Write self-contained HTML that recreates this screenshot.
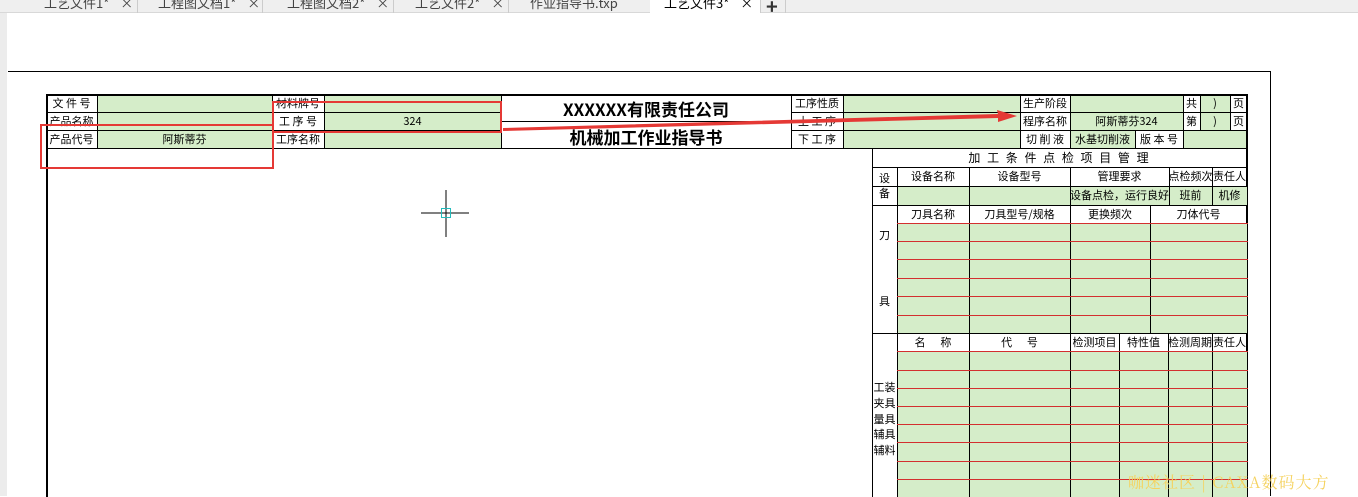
<!DOCTYPE html>
<html><head><meta charset="utf-8"><style>
*{margin:0;padding:0;box-sizing:border-box}
body{width:1358px;height:496px;overflow:hidden;background:#fff;position:relative;font-family:"Liberation Sans","Noto Sans CJK SC",sans-serif}
.a{position:absolute}
.c{position:absolute;font-size:11px;line-height:1;display:flex;align-items:center;justify-content:center;color:#000;white-space:nowrap;overflow:hidden;font-family:"Noto Sans CJK SC","WenQuanYi Zen Hei",sans-serif}
.g{background:#d5edc9}
.tab{position:absolute;top:-7px;font-size:13px;color:#444;font-family:"Noto Sans CJK SC",sans-serif}
</style></head><body>
<div class="a" style="left:0;top:0;width:1358px;height:13px;background:#efefef;border-bottom:1px solid #d8d8d8"></div>
<div class="a" style="left:650px;top:0;width:110px;height:14px;background:#fff"></div>
<div class="tab" style="left:44px">工艺文件1* <span style="margin-left:8px">×</span></div>
<div class="tab" style="left:158px">工程图文档1* <span style="margin-left:8px">×</span></div>
<div class="tab" style="left:287px">工程图文档2* <span style="margin-left:8px">×</span></div>
<div class="tab" style="left:415px">工艺文件2* <span style="margin-left:8px">×</span></div>
<div class="tab" style="left:530px">作业指导书.txp</div>
<div class="tab" style="left:664px;color:#000">工艺文件3* <span style="margin-left:8px">×</span></div>
<div class="tab" style="left:766px;font-size:20px;top:-9px;font-weight:bold;color:#333">+</div>
<div class="a" style="left:137px;top:0;width:1px;height:13px;background:#ccc"></div>
<div class="a" style="left:262px;top:0;width:1px;height:13px;background:#ccc"></div>
<div class="a" style="left:393px;top:0;width:1px;height:13px;background:#ccc"></div>
<div class="a" style="left:508px;top:0;width:1px;height:13px;background:#ccc"></div>
<div class="a" style="left:760px;top:0;width:1px;height:13px;background:#ccc"></div>
<div class="a" style="left:785px;top:0;width:1px;height:13px;background:#ccc"></div>
<div class="a" style="left:0;top:13px;width:7px;height:483px;background:#ececec"></div>
<div class="a" style="left:8px;top:71px;width:1263px;height:1px;background:#000"></div>
<div class="a" style="left:1270px;top:71px;width:1px;height:425px;background:#000"></div>
<div id="t"></div>
<div class="a" style="left:1128px;top:470px;font-size:16px;color:#f5d25e;font-family:'Noto Serif CJK SC',serif;letter-spacing:1px">咖迷社区 | CAXA数码大方</div>
<svg class="a" style="left:0;top:0" width="1358" height="496">
<rect x="41" y="125" width="232" height="43" fill="none" stroke="#e53935" stroke-width="2"/>
<rect x="273" y="102" width="228" height="30" fill="none" stroke="#e53935" stroke-width="2"/>
<polygon points="503,128 998,114 997,110 1017,116 998,122 998,118 503,131" fill="#e53935"/>
<line x1="421" y1="213" x2="469" y2="213" stroke="#000"/>
<line x1="446" y1="190" x2="446" y2="237" stroke="#000"/>
<rect x="441.5" y="208.5" width="9" height="9" fill="none" stroke="#2bb"/>
</svg>
<script>
var h='';
function c(x1,y1,x2,y2,txt,g,st){h+='<div class="c'+(g?' g':'')+'" style="left:'+x1+'px;top:'+y1+'px;width:'+(x2-x1)+'px;height:'+(y2-y1)+'px;'+(st||'')+'">'+(txt||'')+'</div>';}
function L(x1,y1,x2,y2,col,w){w=w||1;if(y1==y2)h+='<div class="a" style="left:'+x1+'px;top:'+y1+'px;width:'+(x2-x1+1)+'px;height:'+w+'px;background:'+col+'"></div>';else h+='<div class="a" style="left:'+x1+'px;top:'+y1+'px;width:'+w+'px;height:'+(y2-y1+1)+'px;background:'+col+'"></div>';}
var R=[94,112,130,148];
c(46,R[0],97,R[1],'文 件 号');c(97,R[0],272,R[1],'',1);c(272,R[0],324,R[1],'材料牌号');c(324,R[0],501,R[1],'',1);
c(791,R[0],843,R[1],'工序性质');c(843,R[0],1020,R[1],'',1);c(1020,R[0],1070,R[1],'生产阶段');c(1070,R[0],1183,R[1],'',1);
c(1183,R[0],1200,R[1],'共');c(1200,R[0],1230,R[1],')',1);c(1230,R[0],1247,R[1],'页');
c(46,R[1],97,R[2],'产品名称');c(97,R[1],272,R[2],'',1);c(272,R[1],324,R[2],'工 序 号');c(324,R[1],501,R[2],'324',1);
c(791,R[1],843,R[2],'上 工 序');c(843,R[1],1020,R[2],'',1);c(1020,R[1],1070,R[2],'程序名称');c(1070,R[1],1183,R[2],'阿斯蒂芬324',1);
c(1183,R[1],1200,R[2],'第');c(1200,R[1],1230,R[2],')',1);c(1230,R[1],1247,R[2],'页');
c(46,R[2],97,R[3],'产品代号');c(97,R[2],272,R[3],'阿斯蒂芬',1);c(272,R[2],324,R[3],'工序名称');c(324,R[2],501,R[3],'',1);
c(791,R[2],843,R[3],'下 工 序');c(843,R[2],1020,R[3],'',1);c(1020,R[2],1070,R[3],'切 削 液');c(1070,R[2],1135,R[3],'水基切削液',1);c(1135,R[2],1183,R[3],'版 本 号');c(1183,R[2],1247,R[3],'',1);
c(501,96,791,121,'XXXXXX有限责任公司',0,'font-size:17px;font-weight:bold');
c(501,123,791,149,'机械加工作业指导书',0,'font-size:17px;font-weight:bold');
for(var i=1;i<3;i++){L(46,R[i],501,R[i],'#000');L(791,R[i],1247,R[i],'#000');}
L(501,121,791,121,'#000');
L(46,94,1247,94,'#000',2);L(46,148,1247,148,'#000');
[46,97,272,324,501,791,843,1020,1070,1183].forEach(function(x){L(x,94,x,148,'#000');});
L(1135,130,1135,148,'#000');L(1200,94,1200,130,'#000');L(1230,94,1230,130,'#000');
L(46,94,46,496,'#000',2);L(1246,94,1246,496,'#000',2);
c(872,148,1247,167,'加 工 条 件 点 检 项 目 管 理',0,'font-size:12px;letter-spacing:2px');
c(872,167,897,205,'设<br>备',0,'flex-direction:column;line-height:1.4;white-space:normal');
c(897,167,969,186,'设备名称');c(969,167,1070,186,'设备型号');c(1070,167,1169,186,'管理要求');c(1169,167,1212,186,'点检频次');c(1212,167,1247,186,'责任人');
c(897,186,969,205,'',1);c(969,186,1070,205,'',1);c(1070,186,1169,205,'设备点检，运行良好',1);c(1169,186,1212,205,'班前',1);c(1212,186,1247,205,'机修',1);
c(872,205,897,333,'刀<br><br><br><br><br>具',0,'flex-direction:column;line-height:1.2;white-space:normal');
c(897,205,969,223,'刀具名称');c(969,205,1070,223,'刀具型号/规格');c(1070,205,1150,223,'更换频次');c(1150,205,1247,223,'刀体代号');
var tr=[223,241,259,278,296,315,333];
for(var i=0;i<6;i++){[[897,969],[969,1070],[1070,1150],[1150,1247]].forEach(function(p){c(p[0],tr[i],p[1],tr[i+1],'',1);});}
c(872,333,897,496,'工装<br>夹具<br>量具<br>辅具<br>辅料',0,'line-height:1.45;white-space:normal;padding-top:10px;text-align:center');
c(897,333,969,351,'名&nbsp;&nbsp;&nbsp;&nbsp;&nbsp;&nbsp;称');c(969,333,1070,351,'代&nbsp;&nbsp;&nbsp;&nbsp;&nbsp;&nbsp;号');c(1070,333,1119,351,'检测项目');c(1119,333,1168,351,'特性值');c(1168,333,1212,351,'检测周期');c(1212,333,1247,351,'责任人');
var br=[351,370,388,406,424,442,461,479,497];
for(var i=0;i<8;i++){[[897,969],[969,1070],[1070,1119],[1119,1168],[1168,1212],[1212,1247]].forEach(function(p){c(p[0],br[i],p[1],br[i+1],'',1);});}
L(872,148,872,496,'#000');L(872,167,1247,167,'#000');L(872,186,1247,186,'#000');L(872,205,1247,205,'#000');L(872,333,1247,333,'#000');
L(897,167,897,496,'#000');L(969,167,969,496,'#000');L(1070,167,1070,496,'#000');L(1169,167,1169,205,'#000');L(1212,167,1212,205,'#000');
L(1150,205,1150,333,'#000');L(1119,333,1119,496,'#000');L(1168,333,1168,496,'#000');L(1212,333,1212,496,'#000');
for(var i=0;i<6;i++)L(897,tr[i],1247,tr[i],'#d32f2f');
for(var i=0;i<8;i++)L(897,br[i],1247,br[i],'#d32f2f');
document.getElementById('t').innerHTML=h;
</script>
</body></html>
